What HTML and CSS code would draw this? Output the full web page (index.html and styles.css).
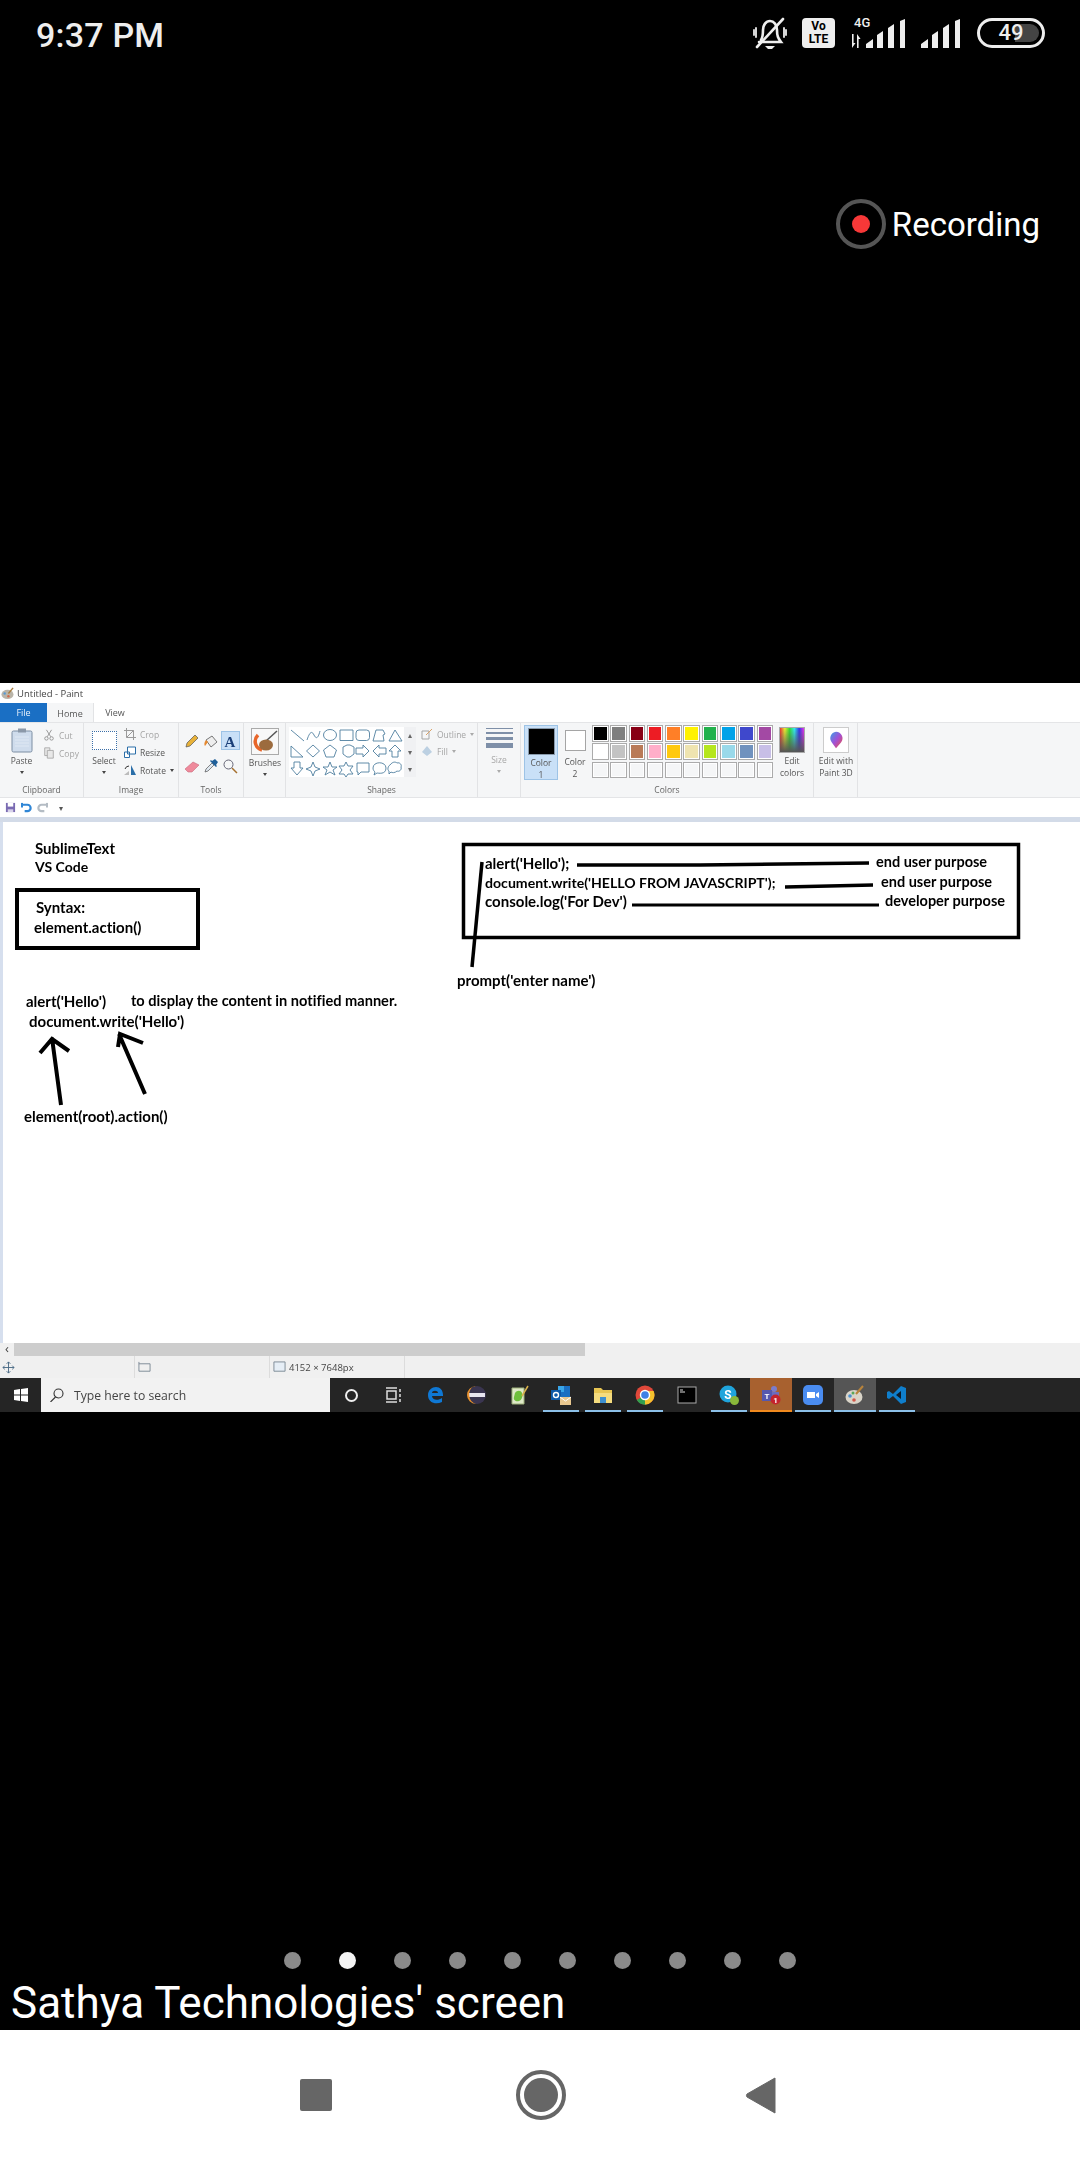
FILE: index.html
```html
<!DOCTYPE html>
<html lang="en">
<head>
<meta charset="utf-8">
<title>Sathya Technologies' screen</title>
<link rel="stylesheet" href="styles.css">
</head>
<body>
<div class="phone">
  <header class="status">
    <span class="time">9:37 PM</span>
    <div class="status-icons">
      <svg class="i-bell" viewBox="0 0 34 34" fill="none" stroke="#eee" stroke-width="2.6" stroke-linecap="round">
        <path d="M8 24c2-3 2-5 2-10 0-5 3-9 7-9s7 4 7 9c0 6 1 8 4 12H6"/><path d="M30 3 4 31"/><path d="M12 30h10l-3 3h-4z" fill="#eee" stroke="none"/><path d="M3 12v9M1 14v5M31 12v9M33 14v5" stroke-width="1.8"/>
      </svg>
      <div class="volte"><span>Vo</span><span>LTE</span></div>
      <div class="net">
        <span class="net-4g">4G</span>
        <svg class="i-arrows" viewBox="0 0 12 14" fill="#eee"><path d="M3 0h1.6v9H6.5L3 14zM8 0l3.6 5H9.6v9H8z"/></svg>
        <svg class="i-sig" viewBox="0 0 40 29" fill="#eee"><path d="M0 29v-4l7-5v9zM11 29V16l6-4v17zM22 29V9l6-4v24zM34 29V2l5-2v29z"/></svg>
      </div>
      <svg class="i-sig i-sig2" viewBox="0 0 40 29" fill="#eee"><path d="M0 29v-4l7-5v9zM11 29V16l6-4v17zM22 29V9l6-4v24zM34 29V2l5-2v29z"/></svg>
      <div class="battery"><span class="battery-fill"></span><span class="battery-num">49</span></div>
    </div>
  </header>

  <div class="rec-row">
    <span class="rec-dot"></span>
    <span class="rec-text">Recording</span>
  </div>

  <section class="paint">
    <div class="titlebar">
      <svg class="i-app" viewBox="0 0 14 14"><ellipse cx="7" cy="8" rx="6.5" ry="5" fill="#b9b4a8"/><circle cx="4" cy="7" r="1.3" fill="#5a9bd4"/><circle cx="8" cy="10" r="1.3" fill="#d36a4a"/><path d="m8 7 5-6" stroke="#a77a3c" stroke-width="1.5"/></svg>
      <span>Untitled - Paint</span>
    </div>
    <nav class="tabs">
      <span class="tab tab-file">File</span>
      <span class="tab tab-home">Home</span>
      <span class="tab tab-view">View</span>
    </nav>

    <div class="ribbon">
      <div class="group g-clip">
        <div class="group-body">
          <div class="big">
            <svg class="i-paste" viewBox="0 0 22 25"><rect x="1" y="3" width="20" height="21" rx="1.5" fill="#cfdcec" stroke="#7c8ea3"/><rect x="7" y="0.5" width="8" height="4" fill="#8b98a8"/><path d="M4 9h14M4 12h14M4 15h14M4 18h14" stroke="#dfe8f3" stroke-width="1"/></svg>
            <span class="big-label">Paste</span><i class="caret"></i>
          </div>
          <div class="stack">
            <div class="cmd off"><svg class="i-s" viewBox="0 0 12 14" fill="none" stroke="#8c8c8c"><path d="m3 1 5 8M9 1 4 9"/><circle cx="3" cy="11" r="2"/><circle cx="9" cy="11" r="2"/></svg><span>Cut</span></div>
            <div class="cmd off"><svg class="i-s" viewBox="0 0 12 14" fill="#e8e8e8" stroke="#a5a5a5"><path d="M1 1h6v9H1z"/><path d="M4 4h7v9H4z"/></svg><span>Copy</span></div>
          </div>
        </div>
        <div class="group-label">Clipboard</div>
      </div>

      <div class="group g-image">
        <div class="group-body">
          <div class="big big-select">
            <span class="i-select"></span>
            <span class="big-label">Select</span><i class="caret"></i>
          </div>
          <div class="stack stack3">
            <div class="cmd off"><svg class="i-s" viewBox="0 0 12 12" fill="none" stroke="#9a9a9a"><path d="M2.5 0v9.5H12M0 2.5h9.5V12M2.5 9.5l7-7"/></svg><span>Crop</span></div>
            <div class="cmd"><svg class="i-s" viewBox="0 0 12 12" fill="none" stroke="#2a6ea8"><path d="M3.5 1h8v7h-8zM.5 6h5v5.500h-5z" fill="#fff"/></svg><span>Resize</span></div>
            <div class="cmd"><svg class="i-s" viewBox="0 0 12 12"><path d="M7 1v10h5z" fill="#2a6ea8"/><path d="M0 11l5-4v4z" fill="#bbb"/><path d="M1 5q1-3 4-3" stroke="#333" fill="none"/></svg><span>Rotate</span><i class="caret caret-in"></i></div>
          </div>
        </div>
        <div class="group-label">Image</div>
      </div>

      <div class="group g-tools">
        <div class="tools-grid">
          <span class="tool"><svg viewBox="0 0 16 16"><path d="m2 14 1-4 8-8 3 3-8 8z" fill="#e8b23a" stroke="#555" stroke-width=".7"/></svg></span>
          <span class="tool"><svg viewBox="0 0 16 16"><path d="m3 7 6-4 5 6-6 5z" fill="#eee" stroke="#777"/><path d="M3 7c-2 2-2 5-1 6 1-1 2-3 3-4z" fill="#e6892f"/></svg></span>
          <span class="tool tool-on"><svg viewBox="0 0 16 16"><text x="8" y="14" text-anchor="middle" class="a-glyph">A</text></svg></span>
          <span class="tool"><svg viewBox="0 0 16 16"><path d="m1 11 8-7 6 3-7 7H4z" fill="#ef8a9c" stroke="#c7687a" stroke-width=".6"/></svg></span>
          <span class="tool"><svg viewBox="0 0 16 16"><path d="m2 14 1-3 6-6 2 2-6 6z" fill="#dfe8f0" stroke="#555" stroke-width=".7"/><path d="m9 3 3-2 3 3-2 3 1 1-1 1-6-6 1-1z" fill="#1f5f99"/></svg></span>
          <span class="tool"><svg viewBox="0 0 16 16" fill="none"><circle cx="6.500" cy="6.500" r="4.500" stroke="#667"/><path d="m10 10 5 5" stroke="#a5702e" stroke-width="1.500"/></svg></span>
        </div>
        <div class="group-label">Tools</div>
      </div>

      <div class="group g-brush">
        <div class="big big-brush">
          <svg class="i-brush" viewBox="0 0 28 27"><rect x=".5" y=".5" width="27" height="26" fill="#f8f8f8" stroke="#aaa"/><path d="M7 7C2 12 4 20 11 22" stroke="#e8662a" stroke-width="3.500" fill="none"/><path d="M15 13 26 3" stroke="#555" stroke-width="1.500"/><ellipse cx="15" cy="17" rx="7" ry="5.500" fill="#9c6b3e"/></svg>
          <span class="big-label">Brushes</span><i class="caret"></i>
        </div>
        <div class="group-label">&nbsp;</div>
      </div>

      <div class="group g-shapes">
        <div class="group-body shapes-body">
          <svg class="shapes" viewBox="0 0 115 50" fill="none" stroke="#4f7f9f" stroke-width=".9" stroke-linejoin="round">
            <path d="M2 3 15 14"/>
            <path d="M18 13c3-9 5-9 7-5s4 4 6-4"/>
            <ellipse cx="41" cy="8" rx="6.500" ry="5.500"/>
            <rect x="51" y="3" width="13" height="10.500"/>
            <rect x="67" y="3" width="13.500" height="10.500" rx="3"/>
            <path d="M84 14 87 3h7l2 4-2 1 1 6z"/>
            <path d="M100 14 106 3l7 11z"/>
            <path d="M2 30V19l12 11z"/>
            <path d="m24 18 6.500 6-6.500 6-6.500-6z"/>
            <path d="m41 18 6.500 5-2.500 7h-8l-2.500-7z"/>
            <path d="m54 20 4-2h3l4 2v7l-4 3h-3l-4-3z"/>
            <path d="M67 21h7v-3l6 6-6 6v-3h-7z"/>
            <path d="M97 21h-7v-3l-6 6 6 6v-3h7z"/>
            <path d="m106 18 6 6h-3v6h-6v-6h-3z"/>
            <path d="M5 35v6H2l6 7 6-7h-3v-6z"/>
            <path d="m24 35 2 5 5 2-5 2-2 5-2-5-5-2 5-2z"/>
            <path d="m41 35 2 5h5l-4 3 2 5-5-3-5 3 2-5-4-3h5z"/>
            <path d="m57 35 2 4h5l-3 4 3 4h-5l-2 3-2-3h-5l3-4-3-4h5z"/>
            <path d="M68 36h12v9h-8l-3 3v-3h-1z"/>
            <path d="M84 41c0-7 13-7 13 0s-8 5-9 5l-3 2 1-3c-1-1-2-2-2-4z"/>
            <path d="M101 38c3-4 6-3 7-2 3-1 5 2 4 4 1 3-2 5-4 4-2 2-5 2-6 1l-2 2v-3c-2-1-1-5 1-6z"/>
          </svg>
          <div class="shape-scroll"><i>▴</i><i>▾</i><i>▾</i></div>
          <div class="stack stack-out">
            <div class="cmd off"><svg class="i-s" viewBox="0 0 12 12" fill="none" stroke="#a5a5a5"><path d="M1 3h7v8H1z"/><path d="m5 7 6-6" stroke="#d9a26a"/></svg><span>Outline</span><i class="caret caret-in caret-off"></i></div>
            <div class="cmd off"><svg class="i-s" viewBox="0 0 12 12"><path d="m6 1 5 6-5 4-5-4z" fill="#bcd0e2"/></svg><span>Fill</span><i class="caret caret-in caret-off"></i></div>
          </div>
        </div>
        <div class="group-label">Shapes</div>
      </div>

      <div class="group g-size">
        <div class="big big-size">
          <div class="size-lines"><i class="l1"></i><i class="l2"></i><i class="l3"></i><i class="l4"></i></div>
          <span class="big-label off-label">Size</span><i class="caret caret-off"></i>
        </div>
        <div class="group-label">&nbsp;</div>
      </div>

      <div class="group g-colors">
        <div class="group-body colors-body">
          <div class="color-btn color-on"><span class="swatch sw-black"></span><span class="two-line">Color<br>1</span></div>
          <div class="color-btn"><span class="swatch sw-white"></span><span class="two-line">Color<br>2</span></div>
          <div class="palette">
            <i class="c c01"></i><i class="c c02"></i><i class="c c03"></i><i class="c c04"></i><i class="c c05"></i><i class="c c06"></i><i class="c c07"></i><i class="c c08"></i><i class="c c09"></i><i class="c c10"></i>
            <i class="c c11"></i><i class="c c12"></i><i class="c c13"></i><i class="c c14"></i><i class="c c15"></i><i class="c c16"></i><i class="c c17"></i><i class="c c18"></i><i class="c c19"></i><i class="c c20"></i>
            <i class="c"></i><i class="c"></i><i class="c"></i><i class="c"></i><i class="c"></i><i class="c"></i><i class="c"></i><i class="c"></i><i class="c"></i><i class="c"></i>
          </div>
          <div class="edit-btn"><span class="rainbow"></span><span class="two-line">Edit<br>colors</span></div>
        </div>
        <div class="group-label">Colors</div>
      </div>

      <div class="group g-3d">
        <div class="edit-btn edit-3d">
          <span class="tile-3d"><svg viewBox="0 0 24 24"><defs><linearGradient id="g3d" x1="0" y1="0" x2="1" y2="1"><stop offset="0" stop-color="#37a2e8"/><stop offset=".5" stop-color="#a24fd6"/><stop offset="1" stop-color="#f0503c"/></linearGradient></defs><path d="M12 2a8 8 0 0 1 6 13l-6 7-5-7A8 8 0 0 1 12 2z" fill="url(#g3d)"/></svg></span>
          <span class="two-line">Edit with<br>Paint 3D</span>
        </div>
      </div>
    </div>

    <div class="qat">
      <svg class="i-q" viewBox="0 0 12 12"><path d="M1 1h10v10H1z" fill="#7a6bb2"/><path d="M3 1h6v4H3z" fill="#fff"/><path d="M3 8h6v3H3z" fill="#d8d3ea"/></svg>
      <svg class="i-q" viewBox="0 0 12 12" fill="none" stroke="#2f86d6" stroke-width="2.400"><path d="M2 3h5a3.500 3.500 0 0 1 0 7H4"/><path d="M1 1v5h0"/></svg>
      <svg class="i-q" viewBox="0 0 12 12" fill="none" stroke="#b4bcc4" stroke-width="2.400"><path d="M10 3H5a3.500 3.500 0 0 0 0 7h3"/><path d="M11 1v5"/></svg>
      <span class="qat-more">▾</span>
    </div>
    <div class="rule"></div>

    <div class="canvas">
      <svg class="ink" viewBox="0 0 1080 521" fill="none" stroke="#000">
        <rect x="17" y="68" width="181" height="58" stroke-width="4"/>
        <rect x="463.500" y="22.500" width="555" height="93" stroke-width="3.500"/>
        <path d="M482 40 472 145" stroke-width="3.500"/>
        <path d="M577 43H700L869 41" stroke-width="3.500"/>
        <path d="M785 65 873 63" stroke-width="3.500"/>
        <path d="M632 83 879 83" stroke-width="3"/>
        <path d="M61 283 52 216M40 231 52 217 69 229" stroke-width="4"/>
        <path d="M145 272 119 212M118 225 120 212 143 221" stroke-width="4"/>
      </svg>
      <span class="t t-sublime">SublimeText</span>
      <span class="t t-vs">VS Code</span>
      <span class="t t-syntax">Syntax:</span>
      <span class="t t-action">element.action()</span>
      <span class="t t-alert">alert('Hello')</span>
      <span class="t t-display">to display the content in notified manner.</span>
      <span class="t t-docwrite">document.write('Hello')</span>
      <span class="t t-root">element(root).action()</span>
      <span class="t t-a1">alert('Hello');</span>
      <span class="t t-a2">document.write('HELLO FROM JAVASCRIPT');</span>
      <span class="t t-a3">console.log('For Dev')</span>
      <span class="t t-e1">end user purpose</span>
      <span class="t t-e2">end user purpose</span>
      <span class="t t-e3">developer purpose</span>
      <span class="t t-prompt">prompt('enter name')</span>
    </div>

    <div class="scrollbar"><span class="scroll-arrow">‹</span><span class="scroll-thumb"></span></div>

    <footer class="statusbar">
      <div class="sb-cell sb-a"><svg class="i-sb" viewBox="0 0 14 14" fill="none" stroke="#4a6a85"><path d="M7 1v12M1 7h12M5 3l2-2 2 2M5 11l2 2 2-2M3 5 1 7l2 2M11 5l2 2-2 2"/></svg></div>
      <div class="sb-cell sb-b"><svg class="i-sb" viewBox="0 0 14 14" fill="none" stroke="#7a8894"><path d="M1 1v10h12V3H1"/></svg></div>
      <div class="sb-cell sb-c"><svg class="i-sb" viewBox="0 0 14 14" fill="#e6eef6" stroke="#7a8894"><path d="M1 1h12v10H1z"/></svg><span>4152 × 7648px</span></div>
    </footer>

    <div class="taskbar">
      <div class="tb-start"><svg class="i-win" viewBox="0 0 14 14" fill="#fff"><path d="m0 2 6-1v5.500H0zM7 1l7-1v6.500H7zM0 7.500h6V13l-6-1zM7 7.500h7V14l-7-1z"/></svg></div>
      <div class="tb-search">
        <svg class="i-find" viewBox="0 0 14 14" fill="none" stroke="#333" stroke-width="1.100"><circle cx="8.500" cy="5.500" r="4.500"/><path d="m5.500 9-5 5"/></svg>
        <span>Type here to search</span>
      </div>
      <div class="slot"><span class="cortana"></span></div>
      <div class="slot"><svg class="i-tb" viewBox="0 0 20 20" fill="none" stroke="#ddd" stroke-width="1.500"><path d="M4 6h9v8H4zM3 3h11M3 17h11M17 4v3M17 9v3M17 14v3"/></svg></div>
      <div class="slot"><svg class="i-tb" viewBox="0 0 20 20" fill="none"><path d="M3 10c0-5 4-8 8-8s7 3 7 8v1H7c0 4 6 5 10 2v4c-6 3-14 1-14-7zm4-2h6c0-3-6-3-6 0z" fill="#0f78d4"/></svg></div>
      <div class="slot"><svg class="i-tb" viewBox="0 0 20 20"><circle cx="10" cy="10" r="9" fill="#3a3550"/><path d="M2 8h16v4H2z" fill="#e8e6f0"/><path d="M9 1a9 9 0 0 0 0 18 10 10 0 0 1-2-18z" fill="#e8912f"/></svg></div>
      <div class="slot"><svg class="i-tb" viewBox="0 0 20 20"><path d="M3 3h12v16H3z" fill="#dfe9c8" stroke="#9db07a"/><path d="M6 8c2-3 6-3 7 0s0 7-3 8-6-1-5-4z" fill="#6fbf3c"/><path d="m13 11 6-10" stroke="#d8b04a" stroke-width="1.500"/></svg></div>
      <div class="slot open"><svg class="i-tb" viewBox="0 0 20 20"><path d="M7 1h12v12H7z" fill="#1b6fc2"/><path d="M7 1h6v6H7z" fill="#39a5e8"/><path d="M0 5h10v10H0z" fill="#0f5aa8"/><circle cx="5" cy="10" r="2.500" fill="none" stroke="#fff" stroke-width="1.400"/><path d="M9 12h11v8H9z" fill="#e9c890"/><path d="m9 12 5.500 4 5.500-4" fill="none" stroke="#fff"/></svg></div>
      <div class="slot open"><svg class="i-tb" viewBox="0 0 20 20"><path d="M1 3h7l2 2h9v13H1z" fill="#e8c552"/><path d="M1 8h18v10H1z" fill="#f5dc7e"/><path d="M7 12h6v6H7z" fill="#3d8fd0"/></svg></div>
      <div class="slot open"><svg class="i-tb" viewBox="0 0 20 20"><circle cx="10" cy="10" r="9.500" fill="#e0483a"/><path d="M10 10 1.800 15a9.500 9.500 0 0 0 9.700 4.500z" fill="#31a04f"/><path d="M10 10v9.500A9.500 9.500 0 0 0 18.600 6H10z" fill="#f5c22d"/><circle cx="10" cy="10" r="4.500" fill="#3f80e6" stroke="#fff" stroke-width="1.400"/></svg></div>
      <div class="slot"><svg class="i-tb" viewBox="0 0 20 20"><rect x="1" y="2" width="18" height="16" fill="#000" stroke="#aaa"/><path d="M3 5h3M3 7h5" stroke="#ddd"/></svg></div>
      <div class="slot open"><svg class="i-tb" viewBox="0 0 20 20"><circle cx="9" cy="9" r="8.500" fill="#1fa4dc"/><text x="9" y="14" text-anchor="middle" class="s-glyph">S</text><circle cx="15.500" cy="15.500" r="4.500" fill="#8ab83a"/></svg></div>
      <div class="slot open slot-teams"><svg class="i-tb" viewBox="0 0 20 20"><circle cx="13" cy="4" r="3" fill="#7a7ccc"/><path d="M9 7h9v8H9z" fill="#6a6cc0"/><path d="M1 5h10v11H1z" fill="#5558af"/><text x="6" y="13.500" text-anchor="middle" class="t-glyph">T</text><circle cx="14.500" cy="14.500" r="5" fill="#c4232e"/><text x="14.500" y="18" text-anchor="middle" class="n-glyph">1</text></svg></div>
      <div class="slot open"><svg class="i-tb" viewBox="0 0 20 20"><rect width="20" height="20" rx="5" fill="#4a8cf0"/><path d="M4 7h8v6H4z" fill="#fff"/><path d="m13 9 3-2v6l-3-2z" fill="#fff"/></svg></div>
      <div class="slot open slot-paint"><svg class="i-tb" viewBox="0 0 20 20"><ellipse cx="9" cy="12" rx="8.500" ry="7" fill="#d9d4c8"/><circle cx="5" cy="11" r="1.800" fill="#4a8fd0"/><circle cx="9" cy="15" r="1.800" fill="#d3584a"/><circle cx="8" cy="8" r="1.500" fill="#5aa85a"/><path d="m11 9 7-8" stroke="#b8843c" stroke-width="2"/></svg></div>
      <div class="slot open"><svg class="i-tb" viewBox="0 0 20 20"><path d="M14 1 6 9 2 6 0 7v6l2 1 4-3 8 8 5-2V3z" fill="#0f7ecb"/><path d="m14 6-5 4 5 4z" fill="#0b1b2b"/></svg></div>
    </div>
  </section>

  <div class="pager">
    <div class="dots"><i class="dot"></i><i class="dot dot-on"></i><i class="dot"></i><i class="dot"></i><i class="dot"></i><i class="dot"></i><i class="dot"></i><i class="dot"></i><i class="dot"></i><i class="dot"></i></div>
    <div class="who">Sathya Technologies' screen</div>
  </div>

  <nav class="navbar">
    <span class="nav-square"></span>
    <span class="nav-home"><i></i></span>
    <svg class="nav-back" viewBox="0 0 31 37"><path d="M30 1v35L2 20a2.500 2.500 0 0 1 0-3z" fill="#666" stroke="#666" stroke-linejoin="round"/></svg>
  </nav>
</div>
</body>
</html>
```

FILE: styles.css
```css
* { box-sizing: border-box; }
html, body { margin: 0; padding: 0; background: #000; }
.phone { width: 1080px; height: 2160px; display: flex; flex-direction: column; background: #000; overflow: hidden; font-family: Roboto, sans-serif; }

/* phone status bar */
.status { height: 66px; display: flex; align-items: center; justify-content: space-between; padding: 0 35px 0 36px; color: #eee; }
.time { font-size: 34px; font-weight: 500; letter-spacing: .2px; margin-top: 3px; }
.status-icons { display: flex; align-items: center; }
.i-bell { width: 34px; height: 34px; margin-right: 15px; }
.volte { width: 33px; height: 30px; border-radius: 4px; background: #eee; color: #000; display: flex; flex-direction: column; align-items: center; justify-content: center; font: 700 12px/13px Roboto, sans-serif; margin-right: 14px; }
.net { position: relative; width: 57px; height: 30px; display: flex; align-items: flex-end; }
.net-4g { position: absolute; left: 5px; top: -2px; font: 500 13px/14px Roboto, sans-serif; color: #eee; }
.i-arrows { width: 12px; height: 14px; margin-right: 5px; flex: none; }
.i-sig { width: 40px; height: 29px; flex: none; }
.i-sig2 { margin-left: 15px; }
.battery { position: relative; width: 68px; height: 30px; margin-left: 16px; border: 3px solid #eee; border-radius: 15px; display: flex; align-items: center; justify-content: center; overflow: hidden; }
.battery-fill { position: absolute; right: 0; top: 3px; bottom: 3px; width: 24px; background: #444; border-radius: 0 10px 10px 0; margin-right: 3px; }
.battery-num { position: relative; font: 500 22px/24px Roboto, sans-serif; color: #eee; }

/* recording */
.rec-row { height: 617px; display: flex; align-items: flex-start; justify-content: flex-end; gap: 6px; padding: 133px 40px 0 0; }
.rec-dot { width: 50px; height: 50px; border-radius: 50%; background: #000; border: 4px solid #555; display: flex; position: relative; }
.rec-dot::after { content: ""; width: 18px; height: 18px; margin: auto; border-radius: 50%; background: #f73838; }
.rec-text { color: #fff; font-size: 33px; line-height: 52px; }

/* paint window */
.paint { height: 729px; background: #fff; display: flex; flex-direction: column; font-family: "Open Sans", sans-serif; color: #555; font-size: 8.500px; filter: blur(.3px); }
.titlebar { height: 20px; display: flex; align-items: center; gap: 3px; padding-left: 1px; font-size: 9.500px; color: #444; background: #fff; }
.i-app { width: 13px; height: 13px; }
.tabs { height: 19px; display: flex; background: #fff; font-size: 9px; }
.tab { width: 47px; display: flex; align-items: center; justify-content: center; }
.tab-view { width: 42px; }
.tab-file { background: #1a6fc4; color: #e8f1fb; }
.tab-home { background: #f5f6f7; margin-bottom: -1px; border-right: 1px solid #e2e3e5; }

.ribbon { height: 76px; display: flex; background: #f5f6f7; border-top: 1px solid #e4e5e7; border-bottom: 1px solid #e4e5e7; }
.group { display: flex; flex-direction: column; border-right: 1px solid #e2e3e5; }
.group-body { flex: 1; display: flex; min-height: 0; }
.group-label { height: 14px; line-height: 13px; text-align: center; color: #666; }
.g-clip { width: 84px; }
.g-image { width: 95px; }
.g-tools { width: 65px; }
.g-brush { width: 42px; }
.g-shapes { width: 192px; }
.g-size { width: 43px; }
.g-colors { width: 293px; }
.g-3d { width: 44px; }

.big { display: flex; flex-direction: column; align-items: center; width: 40px; padding-top: 5px; flex: none; }
.big-label { margin-top: 2px; line-height: 12px; color: #555; }
.off-label { color: #a8a8a8; }
.caret { width: 0; height: 0; border: 2.500px solid transparent; border-top: 3px solid #444; margin-top: 4px; display: block; }
.caret-in { margin: 3px 0 0 0; }
.caret-off { border-top-color: #aaa; }
.i-paste { width: 22px; height: 25px; }
.g-clip .big { width: 43px; }
.stack { display: flex; flex-direction: column; gap: 6px; padding-top: 6px; }
.stack3 { gap: 6px; padding-top: 5px; }
.cmd { display: flex; align-items: center; gap: 4px; height: 12px; color: #555; }
.cmd.off { color: #a5a5a5; }
.i-s { width: 12px; height: 12px; flex: none; }
.big-select { width: 40px; }
.i-select { display: block; width: 25px; height: 19px; margin-top: 3px; margin-bottom: 3px; border: 1px dotted #3b6fa8; background: #fff; }
.tools-grid { flex: 1; display: grid; grid-template-columns: repeat(3, 19px); grid-auto-rows: 25px; align-content: start; justify-content: center; padding-top: 8px; }
.tool { width: 19px; height: 19px; display: flex; align-items: center; justify-content: center; }
.tool svg { width: 16px; height: 16px; }
.tool-on { background: #c9e0f7; border: 1px solid #9dc3e6; }
.a-glyph { font: 700 15px "Liberation Serif", serif; fill: #1b3f78; }
.big-brush { width: 42px; flex: 1; }
.i-brush { width: 28px; height: 27px; }
.shapes-body { padding: 4px 0 0 3px; gap: 0; }
.shapes { width: 115px; height: 50px; background: #fff; }
.shape-scroll { width: 12px; height: 50px; display: flex; flex-direction: column; align-items: center; justify-content: space-between; font-size: 8px; line-height: 16px; color: #666; background: #f0f1f3; }
.shape-scroll i { font-style: normal; }
.stack-out { padding: 1px 0 0 5px; gap: 5px; }
.big-size { width: 42px; flex: 1; padding-top: 5px; }
.size-lines { width: 27px; display: flex; flex-direction: column; gap: 3px; height: 24px; }
.size-lines i { display: block; background: #7e8fa8; }
.l1 { height: 1px; } .l2 { height: 2px; } .l3 { height: 3px; } .l4 { height: 5px; }
.colors-body { padding: 2px 0 0 3px; }
.color-btn { width: 34px; height: 55px; flex: none; display: flex; flex-direction: column; align-items: center; padding-top: 2px; }
.color-on { background: #c9e0f7; border: 1px solid #9dc3e6; }
.swatch { display: block; flex: none; }
.sw-black { width: 27px; height: 27px; background: #000; border: 1px solid #8899aa; }
.sw-white { width: 21px; height: 21px; background: #fff; border: 1px solid #a5a5a5; margin: 3px 0; }
.two-line { line-height: 12px; text-align: center; margin-top: 2px; display: block; }
.palette { width: 184px; flex: none; display: grid; grid-template-columns: repeat(10, 16.500px); grid-auto-rows: 16.500px; gap: 1.800px; }
.c { display: block; border: 1px solid #ababab; box-shadow: inset 0 0 0 1px #fff; background: #f5f6f7; }
.c01 { background: #000; } .c02 { background: #7f7f7f; } .c03 { background: #880015; } .c04 { background: #ed1c24; } .c05 { background: #ff7f27; }
.c06 { background: #fff200; } .c07 { background: #22b14c; } .c08 { background: #00a2e8; } .c09 { background: #3f48cc; } .c10 { background: #a349a4; }
.c11 { background: #fff; } .c12 { background: #c3c3c3; } .c13 { background: #b97a57; } .c14 { background: #ffaec9; } .c15 { background: #ffc90e; }
.c16 { background: #efe4b0; } .c17 { background: #b5e61d; } .c18 { background: #99d9ea; } .c19 { background: #7092be; } .c20 { background: #c8bfe7; }
.edit-btn { width: 32px; flex: none; display: flex; flex-direction: column; align-items: center; padding-top: 2px; }
.rainbow { display: block; width: 26px; height: 26px; border: 1px solid #aaa; background: linear-gradient(to bottom, transparent, #555), linear-gradient(to right, #e33, #ee3, #3d3, #3ee, #33e, #e3e); flex: none; }
.edit-3d { width: 44px; padding-top: 4px; }
.tile-3d { width: 26px; height: 26px; display: flex; align-items: center; justify-content: center; background: #fff; border: 1px solid #ccc; flex: none; }
.tile-3d svg { width: 20px; height: 20px; }

.qat { height: 19px; display: flex; align-items: center; gap: 5px; padding-left: 5px; background: #fff; }
.i-q { width: 11px; height: 11px; }
.qat-more { margin-left: 6px; font-size: 8px; color: #555; }
.rule { height: 5px; background: #d3dbe8; }

.canvas { position: relative; height: 521px; background: #fff; box-shadow: inset 3px 0 0 #d6dfee; color: #000; }
.ink { position: absolute; inset: 0; width: 1080px; height: 521px; }
.t { position: absolute; font: 700 15px/20px Lato, sans-serif; font-variant-ligatures: none; color: #000; white-space: nowrap; }
.t-sublime { left: 35px; top: 16px; }
.t-vs { left: 35px; top: 35px; font-size: 14px; }
.t-syntax { left: 36px; top: 75px; }
.t-action { left: 34px; top: 94.500px; }
.t-alert { left: 26px; top: 169px; }
.t-display { left: 131px; top: 169px; font-size: 14.600px; }
.t-docwrite { left: 29px; top: 188.500px; }
.t-root { left: 24px; top: 284px; }
.t-a1 { left: 485px; top: 31px; }
.t-a2 { left: 485px; top: 50.500px; font-size: 14.100px; }
.t-a3 { left: 485px; top: 69px; }
.t-e1 { left: 876px; top: 30px; font-size: 14.500px; }
.t-e2 { left: 881px; top: 50px; font-size: 14.500px; }
.t-e3 { left: 885px; top: 69px; font-size: 14.500px; }
.t-prompt { left: 457px; top: 148px; }

.scrollbar { height: 13px; display: flex; background: #f0f0f0; }
.scroll-arrow { width: 14px; text-align: center; font: 13px/11px "Open Sans", sans-serif; color: #444; }
.scroll-thumb { width: 571px; background: #cdcdcd; }
.statusbar { height: 22px; display: flex; background: #f0f0f0; color: #444; font-size: 9.500px; }
.sb-cell { display: flex; align-items: center; gap: 3px; border-right: 1px solid #dcdcdc; padding-left: 2px; }
.sb-a { width: 135px; }
.sb-b { width: 135px; padding-left: 3px; }
.sb-c { width: 135px; padding-left: 3px; }
.i-sb { width: 13px; height: 13px; }

.taskbar { height: 34px; display: flex; background: #252525; }
.tb-start { width: 41px; display: flex; align-items: center; justify-content: center; }
.i-win { width: 14px; height: 14px; }
.tb-search { width: 289px; display: flex; align-items: center; gap: 10px; padding-left: 9px; background: #f2f2f2; color: #444; font-size: 12.200px; }
.i-find { width: 14px; height: 14px; flex: none; }
.slot { width: 42px; position: relative; display: flex; align-items: center; justify-content: center; }
.slot.open::after { content: ""; position: absolute; left: 3px; right: 3px; bottom: 0; height: 2px; background: #8cc0e8; }
.slot-teams { background: #a8612f; }
.slot.slot-teams::after { left: 0; right: 0; background: #f08a1e; }
.slot-paint { background: #555; }
.slot.slot-paint::after { left: 0; right: 0; }
.i-tb { width: 20px; height: 20px; }
.s-glyph { font: 700 12px Roboto, sans-serif; fill: #fff; }
.t-glyph { font: 700 8px Roboto, sans-serif; fill: #fff; }
.n-glyph { font: 700 8px Roboto, sans-serif; fill: #fff; }
.cortana { width: 13px; height: 13px; border: 2px solid #eee; border-radius: 50%; }

/* pager */
.pager { height: 618px; display: flex; flex-direction: column; justify-content: flex-end; background: #000; }
.dots { display: flex; gap: 38px; padding-left: 284px; margin-bottom: 7px; }
.dot { width: 17px; height: 17px; border-radius: 50%; background: #8a8a8a; display: block; }
.dot-on { background: #f4f4f4; }
.who { height: 54px; padding-left: 11px; color: #fff; font-size: 44px; line-height: 54px; }

/* nav */
.navbar { flex: 1; background: #fff; display: flex; align-items: center; padding-left: 300px; }
.nav-square { width: 32px; height: 32px; background: #666; border-radius: 2px; margin-right: 184px; }
.nav-home { width: 50px; height: 50px; border-radius: 50%; border: 4px solid #666; display: flex; margin-right: 179px; }
.nav-home i { width: 34px; height: 34px; margin: auto; background: #666; border-radius: 50%; display: block; }
.nav-back { width: 31px; height: 37px; }
```
